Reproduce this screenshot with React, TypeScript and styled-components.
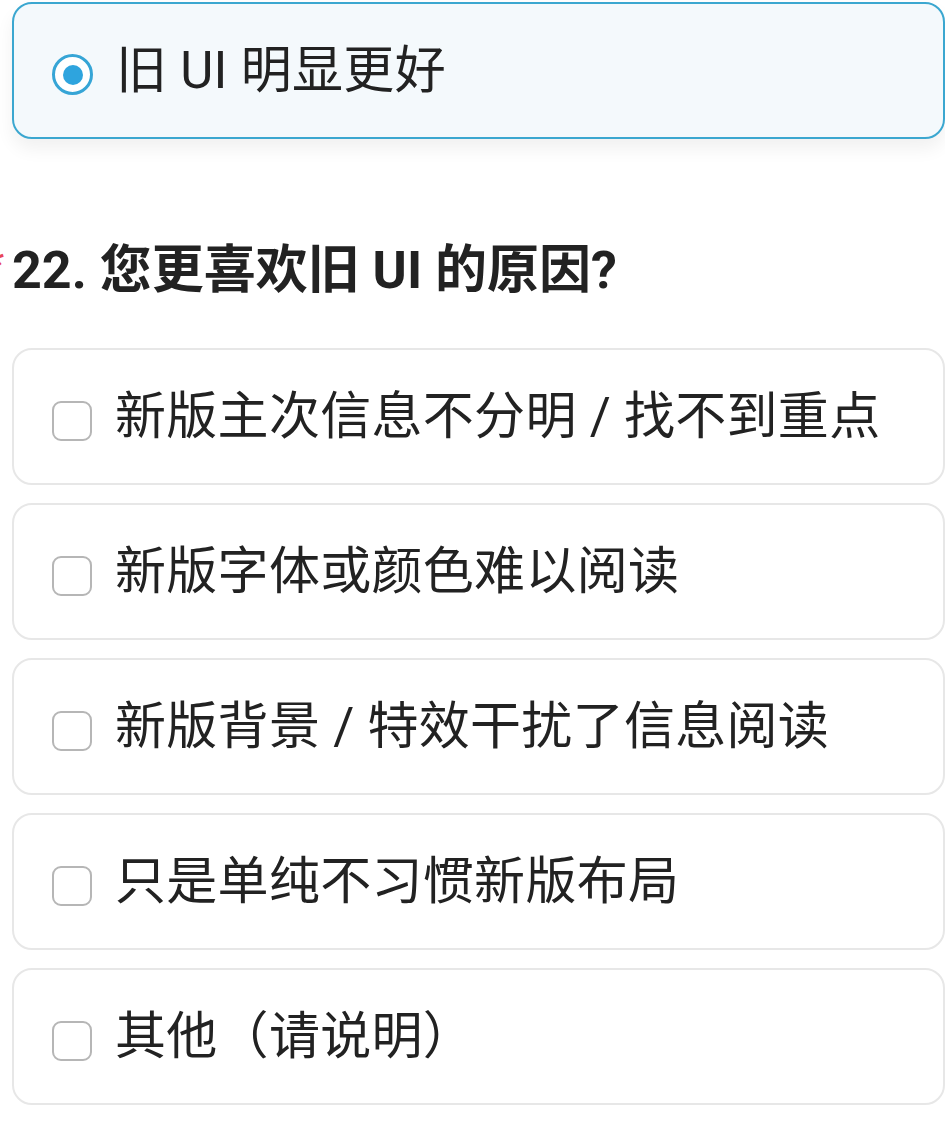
import React from "react";
import styled, { createGlobalStyle } from "styled-components";

const GlobalStyle = createGlobalStyle`
  html, body {
    margin: 0;
    padding: 0;
    background: #ffffff;
  }
  body {
    font-family: Roboto, "Noto Sans CJK SC", "Noto Sans", sans-serif;
    color: #222222;
    -webkit-font-smoothing: antialiased;
  }
`;

const options = [
  "新版主次信息不分明 / 找不到重点",
  "新版字体或颜色难以阅读",
  "新版背景 / 特效干扰了信息阅读",
  "只是单纯不习惯新版布局",
  "其他（请说明）",
];

const App: React.FC = () => {
  return (
    <>
      <GlobalStyle />
      <Page>
        <Card $selected>
          <Radio $checked />
          <Label>旧 UI 明显更好</Label>
        </Card>

        <Question>
          <Required>*</Required>
          22. 您更喜欢旧 UI 的原因?
        </Question>

        <OptionList>
          {options.map((text) => (
            <Card key={text}>
              <Checkbox />
              <Label>{text}</Label>
            </Card>
          ))}
        </OptionList>
      </Page>
    </>
  );
};

const Page = styled.div`
  width: 945px;
  box-sizing: border-box;
  padding: 2px 0 24px 12px;
`;

const Card = styled.div<{ $selected?: boolean }>`
  display: flex;
  align-items: center;
  gap: 23px;
  box-sizing: border-box;
  height: 137px;
  padding-left: 38px;
  border-radius: 20px;
  border: 2px solid ${(p) => (p.$selected ? "#3ba7d0" : "#e7e7e7")};
  background: ${(p) => (p.$selected ? "#f4f9fc" : "#ffffff")};
  box-shadow: ${(p) => (p.$selected ? "0 10px 18px rgba(0, 0, 0, 0.06)" : "none")};
`;

const Radio = styled.span<{ $checked?: boolean }>`
  position: relative;
  flex: none;
  width: 41px;
  height: 41px;
  margin-top: 8px;
  box-sizing: border-box;
  border-radius: 50%;
  border: 3px solid #36a5d6;
  background: #ffffff;
  &::after {
    content: "";
    position: absolute;
    left: 50%;
    top: 50%;
    width: 20px;
    height: 20px;
    margin: -10px 0 0 -10px;
    border-radius: 50%;
    background: #2ea4de;
    display: ${(p) => (p.$checked ? "block" : "none")};
  }
`;

const Checkbox = styled.span`
  flex: none;
  width: 40px;
  height: 40px;
  margin-top: 8px;
  box-sizing: border-box;
  border-radius: 9px;
  border: 2px solid #b6b6b6;
  background: #ffffff;
`;

const Label = styled.span`
  font-size: 51px;
  line-height: 1.2;
  letter-spacing: 0.3px;
  color: #222222;
  white-space: nowrap;
`;

const Question = styled.h2`
  position: relative;
  margin: 94px 0 39px 0;
  font-size: 52px;
  line-height: 76px;
  font-weight: 700;
  color: #222222;
  white-space: nowrap;
`;

const Required = styled.span`
  position: absolute;
  left: -25px;
  top: -6px;
  color: #e8455a;
  font-size: 40px;
  font-weight: 400;
`;

const OptionList = styled.div`
  display: flex;
  flex-direction: column;
  gap: 18px;
`;

export default App;
